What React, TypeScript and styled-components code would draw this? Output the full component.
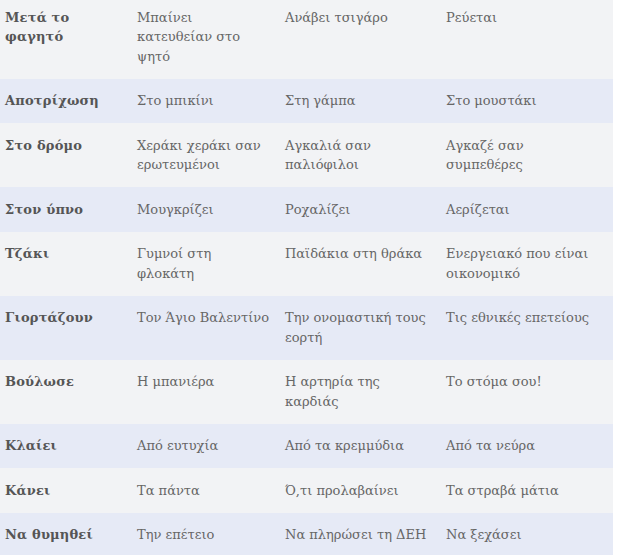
import React from 'react';
import styled, { createGlobalStyle } from 'styled-components';

const GlobalStyle = createGlobalStyle`
  html, body {
    margin: 0;
    padding: 0;
    background: #fff;
  }
`;

const Wrap = styled.div`
  width: 613px;
  margin-top: -5px;
`;

const Table = styled.table`
  width: 100%;
  border-collapse: collapse;
  table-layout: fixed;
  font-family: 'DejaVu Serif', serif;
  font-size: 13px;
  line-height: 19.5px;
  color: #666;
`;

const Row = styled.tr<{ $alt: boolean }>`
  background: ${p => (p.$alt ? '#e6eaf6' : '#f2f3f5')};
`;

const Cell = styled.td<{ $head?: boolean }>`
  vertical-align: top;
  padding: 12.5px 11px 12.5px 5px;
  font-weight: ${p => (p.$head ? 700 : 400)};
  letter-spacing: ${p => (p.$head ? '0.2px' : 'normal')};
  color: ${p => (p.$head ? '#555' : '#666')};
`;

// "Τον Άγιο Βαλεντίνο" keeps to one line (non-breaking spaces)
const rows: string[][] = [
  ['Μετά το φαγητό', 'Μπαίνει κατευθείαν στο ψητό', 'Ανάβει τσιγάρο', 'Ρεύεται'],
  ['Αποτρίχωση', 'Στο μπικίνι', 'Στη γάμπα', 'Στο μουστάκι'],
  ['Στο δρόμο', 'Χεράκι χεράκι σαν ερωτευμένοι', 'Αγκαλιά σαν παλιόφιλοι', 'Αγκαζέ σαν συμπεθέρες'],
  ['Στον ύπνο', 'Μουγκρίζει', 'Ροχαλίζει', 'Αερίζεται'],
  ['Τζάκι', 'Γυμνοί στη φλοκάτη', 'Παϊδάκια στη θράκα', 'Ενεργειακό που είναι οικονομικό'],
  ['Γιορτάζουν', 'Τον\u00a0Άγιο\u00a0Βαλεντίνο', 'Την ονομαστική τους εορτή', 'Τις εθνικές επετείους'],
  ['Βούλωσε', 'Η μπανιέρα', 'Η αρτηρία της καρδιάς', 'Το στόμα σου!'],
  ['Κλαίει', 'Από ευτυχία', 'Από τα κρεμμύδια', 'Από τα νεύρα'],
  ['Κάνει', 'Τα πάντα', 'Ό,τι προλαβαίνει', 'Τα στραβά μάτια'],
  ['Να θυμηθεί', 'Την επέτειο', 'Να πληρώσει τη ΔΕΗ', 'Να ξεχάσει'],
];

const widths = [132, 148, 161, 172];

export default function App() {
  return (
    <>
      <GlobalStyle />
      <Wrap>
        <Table>
          <colgroup>
            {widths.map((w, i) => (
              <col key={i} style={{ width: w }} />
            ))}
          </colgroup>
          <tbody>
            {rows.map((r, i) => (
              <Row key={i} $alt={i % 2 === 1}>
                {r.map((c, j) => (
                  <Cell key={j} $head={j === 0}>
                    {c}
                  </Cell>
                ))}
              </Row>
            ))}
          </tbody>
        </Table>
      </Wrap>
    </>
  );
}
